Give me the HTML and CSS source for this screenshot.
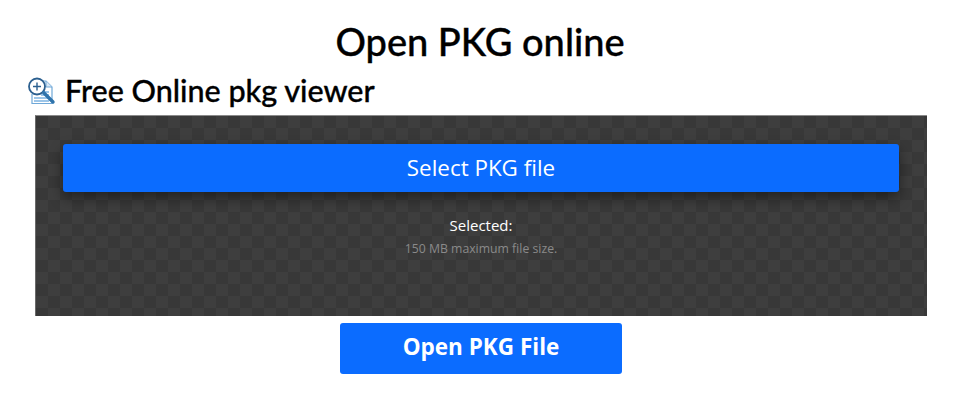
FILE: index.html
```html
<!DOCTYPE html>
<html lang="en">
<head>
<meta charset="utf-8">
<title>Open PKG online</title>
<link rel="stylesheet" href="styles.css">
</head>
<body>
<h1 class="title">Open PKG online</h1>
<h2 class="subtitle">
<svg class="icon" viewBox="0 0 30 30" width="30" height="30" aria-hidden="true">
<path d="M9 5H20L26 11V27.5H6V18" fill="#fff" stroke="#6fa8d8" stroke-width="1.2"/>
<path d="M20 5V11H26" fill="#d7e8f6" stroke="#6fa8d8" stroke-width="1"/>
<path d="M14 16H23M15 19H23M8 22H23M8 25H23" stroke="#7db4e2" stroke-width="1.6"/>
<circle cx="11" cy="10.500" r="8" fill="#fff" stroke="#2b5f8f" stroke-width="1.8"/>
<path d="M7 10.500H15M11 6.500V14.500" stroke="#2b5f8f" stroke-width="1.4"/>
<path d="M17.500 16.500L27 26" stroke="#2f73ab" stroke-width="3.400" stroke-linecap="round"/>
</svg>
<span>Free Online pkg viewer</span>
</h2>
<section class="panel">
<button class="select" type="button">Select PKG file</button>
<p class="selected">Selected:</p>
<p class="limit">150 MB maximum file size.</p>
</section>
<div class="actions"><button class="open" type="button">Open PKG File</button></div>
</body>
</html>
```
FILE: styles.css
```css
* { box-sizing: border-box; }
html, body { margin: 0; padding: 0; background: #fff; }
body { width: 960px; height: 409px; overflow: hidden; font-family: "Open Sans", sans-serif; }
.title {
  margin: 0;
  padding-top: 18px;
  height: 72px;
  text-align: center;
  font: 500 38px/46px "Lato", sans-serif;
  color: #000;
  -webkit-text-stroke: .35px #000;
}
.subtitle {
  display: flex;
  align-items: flex-start;
  gap: 9px;
  margin: 0;
  padding-left: 26px;
  height: 43px;
  font: 500 30.500px/38px "Lato", sans-serif;
  color: #000;
  -webkit-text-stroke: .35px #000;
}
.icon { flex: none; margin-top: 4px; }
.subtitle span { margin-top: -1px; }
.panel {
  margin: 0 33px 0 35px;
  height: 201px;
  padding: 28px 28px 0 27px;
  text-align: center;
  border-top: 1px solid #8a8a8a;
  border-left: 1px solid #6a6a6a;
  background-color: #383838;
  background-image: conic-gradient(#3e3e3e 25%, #383838 0 50%, #3e3e3e 0 75%, #383838 0);
  background-size: 24px 24px;
}
.select {
  display: block;
  width: 100%;
  height: 48px;
  padding: 0 0 1px;
  border: 0;
  border-radius: 3px;
  background: #0b6cff;
  color: #fff;
  font: 400 22.400px/44px "Open Sans", sans-serif;
  box-shadow: 0 6px 14px rgba(0, 0, 0, .45);
}
.selected {
  margin: 23px 0 0;
  color: #fff;
  font: 400 15px/20px "Open Sans", sans-serif;
}
.limit {
  margin: 5px 0 0;
  color: #8a8a8a;
  font: 400 12.250px/18px "Open Sans", sans-serif;
}
.actions { display: flex; justify-content: center; padding: 7px 0 0 2px; }
.open {
  width: 282px;
  height: 51px;
  padding: 0 0 4px;
  border: 0;
  border-radius: 3px;
  background: #0b6cff;
  color: #fff;
  font: 700 22.500px/44px "Open Sans", sans-serif;
}
```
